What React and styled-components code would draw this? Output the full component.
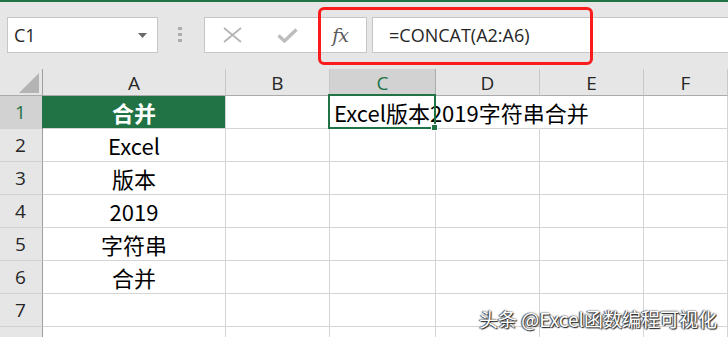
import React from 'react';
import styled, { createGlobalStyle } from 'styled-components';

const Global = createGlobalStyle`
  html, body { margin: 0; padding: 0; background: #fff; overflow: hidden; }
  body { font-family: "Noto Sans", "Noto Sans CJK SC", sans-serif; }
  * { box-sizing: border-box; }
`;

const Page = styled.div`
  position: relative;
  width: 728px;
  height: 337px;
  overflow: hidden;
  background: #fff;
`;

const Toolbar = styled.div`
  height: 69px;
  border-top: 2px solid #217346;
  background: #e6e6e6;
  display: flex;
  align-items: flex-start;
  padding: 15px 0 0 7px;
`;

const NameBox = styled.div`
  width: 151px;
  height: 36px;
  background: #fff;
  border: 1px solid #c6c6c6;
  display: flex;
  align-items: center;
  justify-content: space-between;
  padding: 0 10px 0 6px;
  font-family: "Open Sans", "Noto Sans", sans-serif;
  font-size: 18px;
  color: #262626;
`;

const Dots = styled.div`
  margin: 10px 0 0 20px;
  display: flex;
  flex-direction: column;
  gap: 3px;
`;

const Dot = styled.span`
  width: 4px;
  height: 3px;
  background: #adadad;
`;

const ActionBox = styled.div`
  margin-left: 22px;
  width: 163px;
  height: 36px;
  background: #fff;
  border: 1px solid #c6c6c6;
  display: flex;
  align-items: center;
`;

const Slot = styled.div`
  width: ${p => p.$w}px;
  height: 100%;
  display: flex;
  align-items: center;
  justify-content: center;
`;

const Fx = styled.span`
  font-family: "DejaVu Serif", "Liberation Serif", serif;
  font-style: italic;
  font-size: 19px;
  color: #5a5a5a;
  letter-spacing: -1px;
  margin-top: -1px;
`;

const FormulaBox = styled.div`
  margin-left: 5px;
  flex: 1;
  height: 36px;
  background: #fff;
  border: 1px solid #c6c6c6;
  border-right: none;
  display: flex;
  align-items: center;
  padding-left: 16px;
  font-family: "Open Sans", "Noto Sans", sans-serif;
  font-size: 18px;
  color: #262626;
`;

const Highlight = styled.div`
  position: absolute;
  left: 318px;
  top: 7px;
  width: 275px;
  height: 58px;
  border: 3px solid #fa1c1c;
  border-radius: 6px;
  pointer-events: none;
`;

const Sheet = styled.div`
  display: grid;
  grid-template-columns: 43px 183px 104px 106px 104px 104px 1fr;
  grid-template-rows: 27px repeat(8, 33px);
  background: #fff;
`;

const Corner = styled.div`
  background: #e6e6e6;
  border-right: 1px solid #9e9e9e;
  border-bottom: 1px solid #ababab;
  display: flex;
  align-items: flex-end;
  justify-content: flex-end;
  padding: 0 3px 2px 0;
`;

const ColHead = styled.div`
  background: ${p => (p.$active ? '#d2d2d2' : '#e6e6e6')};
  color: ${p => (p.$active ? '#217346' : '#262626')};
  border-right: 1px solid ${p => (p.$active ? '#ababab' : '#c8c8c8')};
  border-bottom: 1px solid ${p => (p.$active ? '#217346' : '#ababab')};
  display: flex;
  align-items: center;
  justify-content: center;
  font-family: "Open Sans", "Noto Sans", sans-serif;
  font-size: 19px;
  padding-top: 2px;
`;

const RowHead = styled.div`
  background: ${p => (p.$active ? '#d2d2d2' : '#e6e6e6')};
  color: ${p => (p.$active ? '#217346' : '#262626')};
  border-right: 1px solid ${p => (p.$active ? '#217346' : '#9e9e9e')};
  border-bottom: 1px solid #d0d0d0;
  display: flex;
  align-items: center;
  justify-content: center;
  font-family: "Open Sans", "Noto Sans", sans-serif;
  font-size: 19px;
  padding-right: 1px;
`;

const Cell = styled.div`
  position: relative;
  z-index: ${p => (p.$front ? 1 : 'auto')};
  background: ${p => (p.$fill ? '#217346' : 'transparent')};
  color: ${p => (p.$fill ? '#fff' : '#000')};
  font-weight: ${p => (p.$fill ? 700 : 400)};
  border-right: 1px solid ${p => (p.$noRight ? 'transparent' : '#d4d4d4')};
  border-bottom: 1px solid #d4d4d4;
  display: flex;
  align-items: center;
  justify-content: ${p => (p.$left ? 'flex-start' : 'center')};
  padding-left: ${p => (p.$left ? '4px' : '0')};
  white-space: nowrap;
  font-family: "Noto Sans CJK SC", "Noto Sans", sans-serif;
  font-size: 22px;
`;

const Selection = styled.div`
  position: absolute;
  left: -2px;
  top: -2px;
  right: -1px;
  bottom: -1px;
  border: 2px solid #217346;
  pointer-events: none;
`;

const Handle = styled.div`
  position: absolute;
  right: -4px;
  bottom: -4px;
  width: 7px;
  height: 7px;
  background: #217346;
  border: 1px solid #fff;
`;

const Watermark = styled.div`
  position: absolute;
  right: 11px;
  bottom: 5px;
  font-family: "Noto Sans CJK SC", sans-serif;
  font-size: 19px;
  color: #fff;
  text-shadow: 1px 1px 1px #222, -1px 0 1px #444, 0 0 2px #333;
  white-space: nowrap;
`;

const cols = ['A', 'B', 'C', 'D', 'E', 'F'];
const colA = ['合并', 'Excel', '版本', '2019', '字符串', '合并', '', ''];

export default function App() {
  return (
    <Page>
      <Global />
      <Toolbar>
        <NameBox>
          <span>C1</span>
          <svg width="9" height="5" viewBox="0 0 9 5">
            <polygon points="0,0 9,0 4.5,5" fill="#6a6a6a" />
          </svg>
        </NameBox>
        <Dots>
          <Dot />
          <Dot />
          <Dot />
        </Dots>
        <ActionBox>
          <Slot $w={55}>
            <svg width="19" height="16" viewBox="0 0 19 16">
              <path d="M1 1 L18 15 M18 1 L1 15" stroke="#b4b4b4" strokeWidth="1.7" fill="none" />
            </svg>
          </Slot>
          <Slot $w={54}>
            <svg width="21" height="15" viewBox="0 0 21 15">
              <path d="M1.5 7.5 L7.5 13 L19.5 1.5" stroke="#bdbdbd" strokeWidth="3.4" fill="none" />
            </svg>
          </Slot>
          <Slot $w={52}>
            <Fx>fx</Fx>
          </Slot>
        </ActionBox>
        <FormulaBox>=CONCAT(A2:A6)</FormulaBox>
      </Toolbar>
      <Sheet>
        <Corner>
          <svg width="20" height="20" viewBox="0 0 20 20">
            <polygon points="0,20 20,20 20,0" fill="#b4b4b4" />
          </svg>
        </Corner>
        {cols.map(c => (
          <ColHead key={c} $active={c === 'C'}>{c}</ColHead>
        ))}
        {colA.map((v, i) => (
          <React.Fragment key={i}>
            <RowHead $active={i === 0}>{i < 7 ? i + 1 : ''}</RowHead>
            <Cell $fill={i === 0}>{v}</Cell>
            <Cell />
            {i === 0 ? (
              <Cell $left $front $noRight>
                Excel版本2019字符串合并
                <Selection>
                  <Handle />
                </Selection>
              </Cell>
            ) : (
              <Cell />
            )}
            <Cell $noRight={i === 0} />
            <Cell />
            <Cell />
          </React.Fragment>
        ))}
      </Sheet>
      <Highlight />
      <Watermark>头条 @Excel函数编程可视化</Watermark>
    </Page>
  );
}
